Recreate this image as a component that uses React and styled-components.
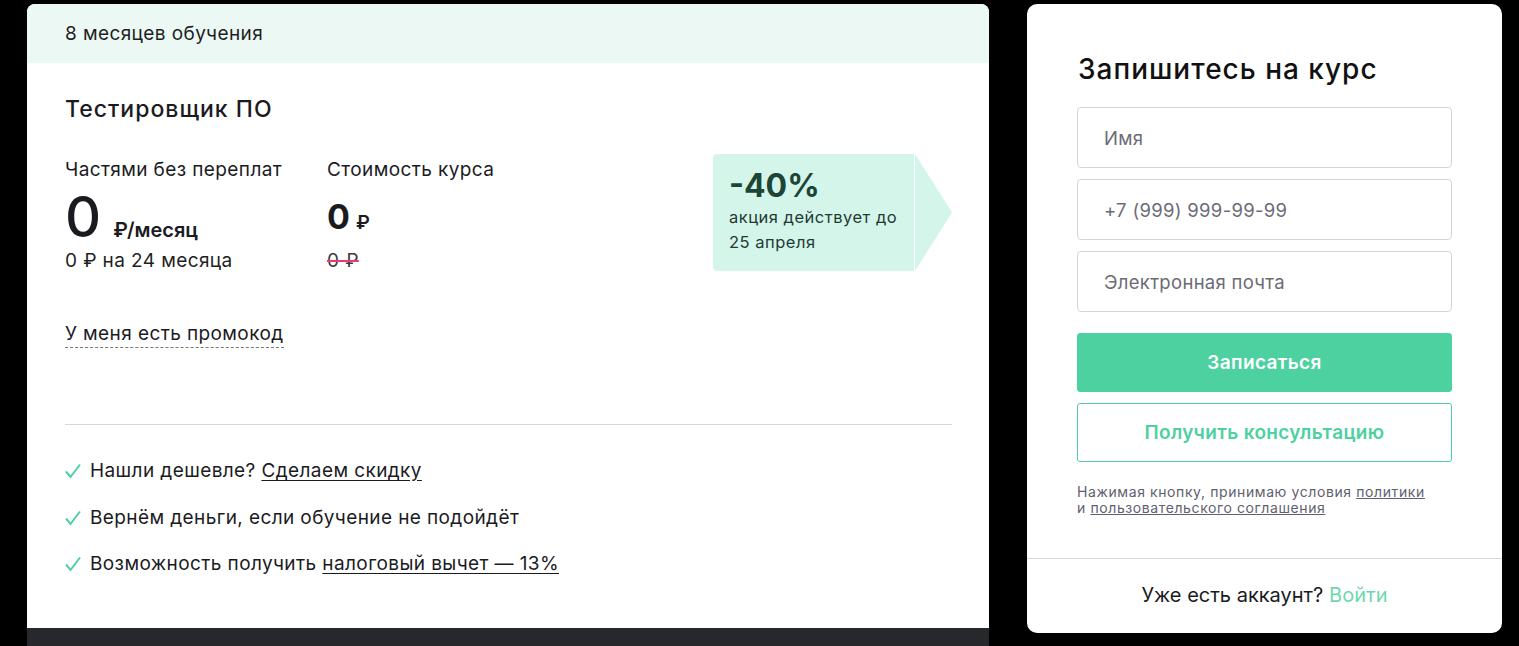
import styled, { createGlobalStyle } from "styled-components"

const Global = createGlobalStyle`
    body {
        margin: 0;
        background: #000;
        font-family: Inter, "Noto Sans", sans-serif;
        color: #1b1b1f;
        overflow: hidden;
    }
    * { box-sizing: border-box; }
`

const Page = styled.div`
    display: flex;
    align-items: flex-start;
    gap: 38px;
    padding: 4px 0 0 27px;
    height: 646px;
`

const LeftColumn = styled.div`
    width: 962px;
    display: flex;
    flex-direction: column;
`

const Card = styled.div`
    background: #fff;
    border-radius: 8px 8px 0 0;
    overflow: hidden;
    height: 624px;
`

const Band = styled.div`
    height: 59px;
    background: #ebf8f3;
    display: flex;
    align-items: center;
    padding: 0 38px;
    font-size: 19px;
    letter-spacing: 0.4px;
    color: #1f1f23;
`

const Content = styled.div`
    padding: 32px 37px 0 38px;
`

const Title = styled.h2`
    margin: 0;
    font-size: 23px;
    letter-spacing: 1px;
    line-height: 28px;
    font-weight: 500;
`

const PriceRow = styled.div`
    display: flex;
    align-items: flex-start;
    margin-top: 35px;
`

const PriceCol = styled.div`
    width: ${p => p.$width}px;
    display: flex;
    flex-direction: column;
`

const Label = styled.div`
    font-size: 19px;
    letter-spacing: 0.4px;
    line-height: 24px;
`

const Amount = styled.div`
    display: flex;
    align-items: baseline;
    height: 60px;
    margin-top: 7px;
`

const Big = styled.span`
    font-size: ${p => p.$size}px;
    line-height: 56px;
    font-weight: ${p => p.$weight};
    margin-right: ${p => p.$gap}px;
`

const Unit = styled.span`
    font-size: ${p => p.$size}px;
    font-weight: 600;
`

const Sub = styled.div`
    font-size: 19px;
    letter-spacing: 0.4px;
    line-height: 24px;
    color: ${p => p.$muted ? "#3a3a40" : "#1f1f23"};
    text-decoration: ${p => p.$struck ? "line-through" : "none"};
    text-decoration-color: #ec3a74;
    text-decoration-thickness: 1.5px;
`

const Promo = styled.div`
    margin-left: auto;
    margin-top: -4px;
    display: flex;
`

const PromoBox = styled.div`
    width: 201px;
    height: 117px;
    background: #d4f5ea;
    border-radius: 4px 0 0 4px;
    padding: 14px 16px;
    color: #233a33;
`

const PromoArrow = styled.div`
    width: 37px;
    height: 117px;
    margin-left: 1px;
    background: #d4f5ea;
    clip-path: polygon(0 0, 100% 50%, 0 100%);
`

const Discount = styled.div`
    font-size: 32px;
    line-height: 36px;
    font-weight: 700;
    color: #1d4537;
`

const PromoText = styled.div`
    font-size: 16.5px;
    letter-spacing: 0.5px;
    line-height: 25px;
    margin-top: 1px;
`

const PromoLink = styled.span`
    display: inline-block;
    margin-top: 49px;
    font-size: 19px;
    letter-spacing: 0.4px;
    line-height: 24px;
    border-bottom: 1px dashed #777;
    padding-bottom: 1px;
`

const Divider = styled.div`
    height: 1px;
    background: #d4d6da;
    margin-top: 76px;
`

const Checklist = styled.ul`
    list-style: none;
    margin: 34px 0 0;
    padding: 0;
    display: flex;
    flex-direction: column;
    gap: 22.5px;
`

const CheckItem = styled.li`
    display: flex;
    align-items: center;
    gap: 9px;
    font-size: 19px;
    letter-spacing: 0.4px;
    line-height: 24px;
`

const TextLink = styled.a`
    color: inherit;
    text-decoration: underline;
    text-underline-offset: 3px;
`

const DarkStrip = styled.div`
    height: 40px;
    background: #27282c;
`

const FormCard = styled.div`
    width: 475px;
    height: 629px;
    background: #fff;
    border-radius: 10px;
    display: flex;
    flex-direction: column;
`

const FormBody = styled.div`
    padding: 47px 50px 42px 50px;
    border-bottom: 1px solid #d6d9de;
`

const FormTitle = styled.h2`
    margin: 0 0 20px 1px;
    font-size: 28px;
    letter-spacing: 1px;
    line-height: 36px;
    font-weight: 500;
    color: #111;
`

const Fields = styled.div`
    display: flex;
    flex-direction: column;
    gap: 11px;
`

const Input = styled.input`
    height: 61px;
    width: 100%;
    border: 1px solid #d2d5da;
    border-radius: 4px;
    padding: 0 26px;
    font: 18.5px Inter, "Noto Sans", sans-serif;
    letter-spacing: 0.3px;
    color: #1b1b1f;
    &::placeholder { color: #6b6b76; }
`

const Button = styled.button`
    height: 59px;
    width: 100%;
    border-radius: 3px;
    font: 600 19px Inter, "Noto Sans", sans-serif;
    letter-spacing: 0.35px;
    background: ${p => p.$outline ? "#fff" : "#4dd1a0"};
    color: ${p => p.$outline ? "#4dd1a0" : "#fff"};
    border: 1px solid #4dd1a0;
    margin-top: ${p => p.$top}px;
`

const Legal = styled.p`
    margin: 22px 0 0;
    font-size: 14px;
    letter-spacing: 0.6px;
    line-height: 16px;
    color: #5f6070;
    a {
        color: inherit;
        text-decoration: underline;
    }
`

const FormFooter = styled.div`
    flex: 1;
    display: flex;
    align-items: center;
    justify-content: center;
    font-size: 20px;
    color: #1b1b1f;
    padding-bottom: 3px;
`

const Accent = styled.a`
    color: #6fd7ae;
    text-decoration: none;
    margin-left: 6px;
`

const Check = () => (
    <svg width="16" height="16" viewBox="0 0 16 16">
        <polyline points="1,8.5 5.5,14 15,1.5" fill="none" stroke="#4dd1a0" strokeWidth="2" />
    </svg>
)

const perks = [
    <>Нашли дешевле? <TextLink>Сделаем скидку</TextLink></>,
    <>Вернём деньги, если обучение не подойдёт</>,
    <>Возможность получить <TextLink>налоговый вычет — 13%</TextLink></>,
]

const App = () => {
    return <>
        <Global />
        <Page>
            <LeftColumn>
                <Card>
                    <Band>8 месяцев обучения</Band>
                    <Content>
                        <Title>Тестировщик ПО</Title>
                        <PriceRow>
                            <PriceCol $width={262}>
                                <Label>Частями без переплат</Label>
                                <Amount>
                                    <Big $size={56} $weight={500} $gap={12}>0</Big>
                                    <Unit $size={20}>₽/месяц</Unit>
                                </Amount>
                                <Sub>0 ₽ на 24 месяца</Sub>
                            </PriceCol>
                            <PriceCol $width={220}>
                                <Label>Стоимость курса</Label>
                                <Amount>
                                    <Big $size={34} $weight={700} $gap={6}>0</Big>
                                    <Unit $size={19}>₽</Unit>
                                </Amount>
                                <div><Sub as="span" $struck $muted>0 ₽</Sub></div>
                            </PriceCol>
                            <Promo>
                                <PromoBox>
                                    <Discount>-40%</Discount>
                                    <PromoText>акция действует до<br />25 апреля</PromoText>
                                </PromoBox>
                                <PromoArrow />
                            </Promo>
                        </PriceRow>
                        <PromoLink>У меня есть промокод</PromoLink>
                        <Divider />
                        <Checklist>
                            {perks.map((p, i) => (
                                <CheckItem key={i}><Check /><span>{p}</span></CheckItem>
                            ))}
                        </Checklist>
                    </Content>
                </Card>
                <DarkStrip />
            </LeftColumn>
            <FormCard>
                <FormBody>
                    <FormTitle>Запишитесь на курс</FormTitle>
                    <Fields>
                        <Input placeholder="Имя" />
                        <Input placeholder="+7 (999) 999-99-99" />
                        <Input placeholder="Электронная почта" />
                    </Fields>
                    <Button $top={21}>Записаться</Button>
                    <Button $outline $top={11}>Получить консультацию</Button>
                    <Legal>
                        Нажимая кнопку, принимаю условия <a>политики</a><br />
                        и <a>пользовательского соглашения</a>
                    </Legal>
                </FormBody>
                <FormFooter>
                    Уже есть аккаунт?<Accent>Войти</Accent>
                </FormFooter>
            </FormCard>
        </Page>
    </>
}

export default App
